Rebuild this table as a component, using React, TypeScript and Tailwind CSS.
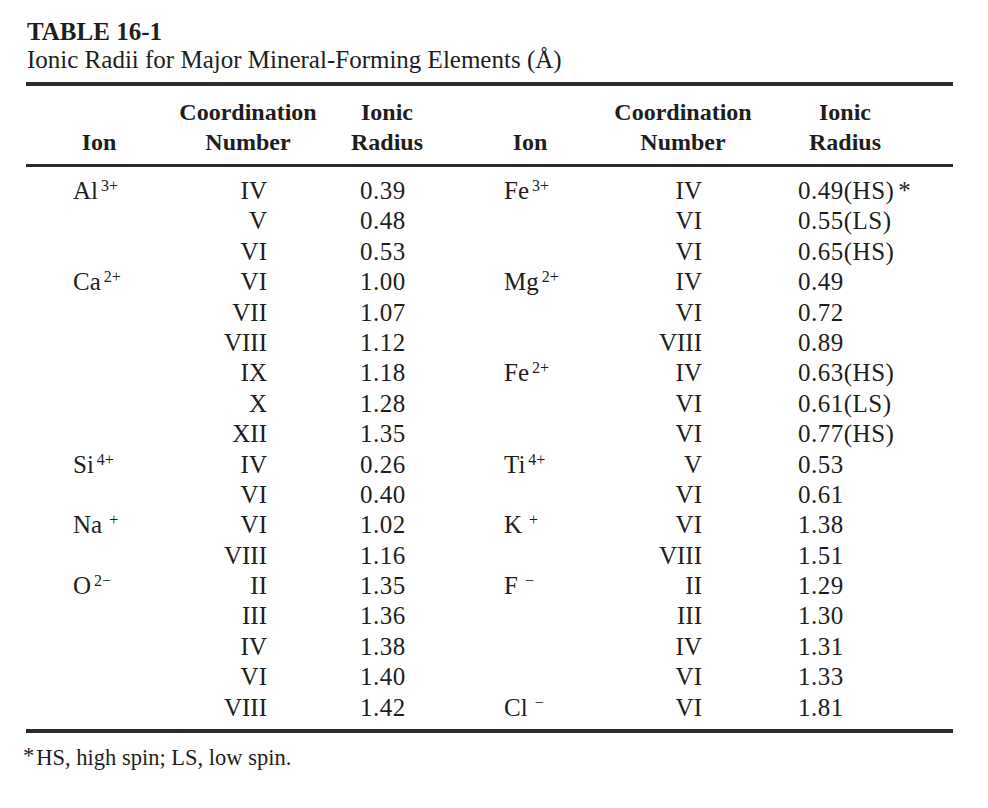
import React from 'react';

type Entry = { ion?: string; charge?: string; cn: string; r: string; note?: boolean };

const leftRows: Entry[] = [
    { ion: 'Al', charge: '3+', cn: 'IV', r: '0.39' },
    { cn: 'V', r: '0.48' },
    { cn: 'VI', r: '0.53' },
    { ion: 'Ca', charge: '2+', cn: 'VI', r: '1.00' },
    { cn: 'VII', r: '1.07' },
    { cn: 'VIII', r: '1.12' },
    { cn: 'IX', r: '1.18' },
    { cn: 'X', r: '1.28' },
    { cn: 'XII', r: '1.35' },
    { ion: 'Si', charge: '4+', cn: 'IV', r: '0.26' },
    { cn: 'VI', r: '0.40' },
    { ion: 'Na', charge: '+', cn: 'VI', r: '1.02' },
    { cn: 'VIII', r: '1.16' },
    { ion: 'O', charge: '2\u2212', cn: 'II', r: '1.35' },
    { cn: 'III', r: '1.36' },
    { cn: 'IV', r: '1.38' },
    { cn: 'VI', r: '1.40' },
    { cn: 'VIII', r: '1.42' },
];

const rightRows: Entry[] = [
    { ion: 'Fe', charge: '3+', cn: 'IV', r: '0.49(HS)', note: true },
    { cn: 'VI', r: '0.55(LS)' },
    { cn: 'VI', r: '0.65(HS)' },
    { ion: 'Mg', charge: '2+', cn: 'IV', r: '0.49' },
    { cn: 'VI', r: '0.72' },
    { cn: 'VIII', r: '0.89' },
    { ion: 'Fe', charge: '2+', cn: 'IV', r: '0.63(HS)' },
    { cn: 'VI', r: '0.61(LS)' },
    { cn: 'VI', r: '0.77(HS)' },
    { ion: 'Ti', charge: '4+', cn: 'V', r: '0.53' },
    { cn: 'VI', r: '0.61' },
    { ion: 'K', charge: '+', cn: 'VI', r: '1.38' },
    { cn: 'VIII', r: '1.51' },
    { ion: 'F', charge: '\u2212', cn: 'II', r: '1.29' },
    { cn: 'III', r: '1.30' },
    { cn: 'IV', r: '1.31' },
    { cn: 'VI', r: '1.33' },
    { ion: 'Cl', charge: '\u2212', cn: 'VI', r: '1.81' },
];

const cols = 'grid grid-cols-[146px_152px_126px_160px_146px_178px]';

const Ion = ({ e }: { e: Entry }) =>
    e.ion ? (
        <span>
            {e.ion}
            <sup className={(e.charge!.length === 1 ? 'ml-[7px]' : 'ml-[3px]') + ' text-[16px]'}>{e.charge}</sup>
        </span>
    ) : null;

const App = () => {
    return (
        <div className="min-h-[808px] w-[988px] bg-white text-[#1e1e1e] font-['Liberation_Serif',serif]">
            <div className="ml-[26px] w-[927px] pt-[20px]">
                {/* Caption */}
                <div className="pl-[1px] text-[25px] leading-[24px] font-bold">TABLE 16-1</div>
                <div className="mt-[2px] pl-[1px] text-[25px] leading-[28px]">
                    Ionic Radii for Major Mineral-Forming Elements (Å)
                </div>
                <div className="mt-[8px] h-[4px] bg-[#2b2b2b]" />

                {/* Column headings */}
                <div className={cols + ' mt-[11px] text-[24px] leading-[30px] font-bold text-center'}>
                    <div className="pt-[30px]">Ion</div>
                    <div>Coordination<br />Number</div>
                    <div>Ionic<br />Radius</div>
                    <div className="pt-[30px]">Ion</div>
                    <div>Coordination<br />Number</div>
                    <div>Ionic<br />Radius</div>
                </div>
                <div className="mt-[7px] h-[3px] bg-[#2b2b2b]" />

                {/* Body */}
                <div className="pt-[9px] text-[25px] leading-[30.4px]">
                    {leftRows.map((l, i) => {
                        const r = rightRows[i];
                        return (
                            <div key={i} className={cols + ' h-[30.4px]'}>
                                <div className="pl-[47px]"><Ion e={l} /></div>
                                <div className="pr-[57px] text-right">{l.cn}</div>
                                <div className="pl-[36px] tracking-[0.02em]">{l.r}</div>
                                <div className="pl-[54px]"><Ion e={r} /></div>
                                <div className="pr-[54px] text-right">{r.cn}</div>
                                <div className="pl-[42px] tracking-[0.02em]">
                                    {r.r}
                                    {r.note && <span className="ml-[4px]">*</span>}
                                </div>
                            </div>
                        );
                    })}
                </div>
                <div className="mt-[6px] h-[4px] bg-[#2b2b2b]" />

                {/* Footnote */}
                <div className="mt-[13px] ml-[-3px] text-[22.5px] leading-[24px]">
                    <span className="relative top-[-2px] mr-[2px]">*</span>HS, high spin; LS, low spin.
                </div>
            </div>
        </div>
    );
};

export default App;
